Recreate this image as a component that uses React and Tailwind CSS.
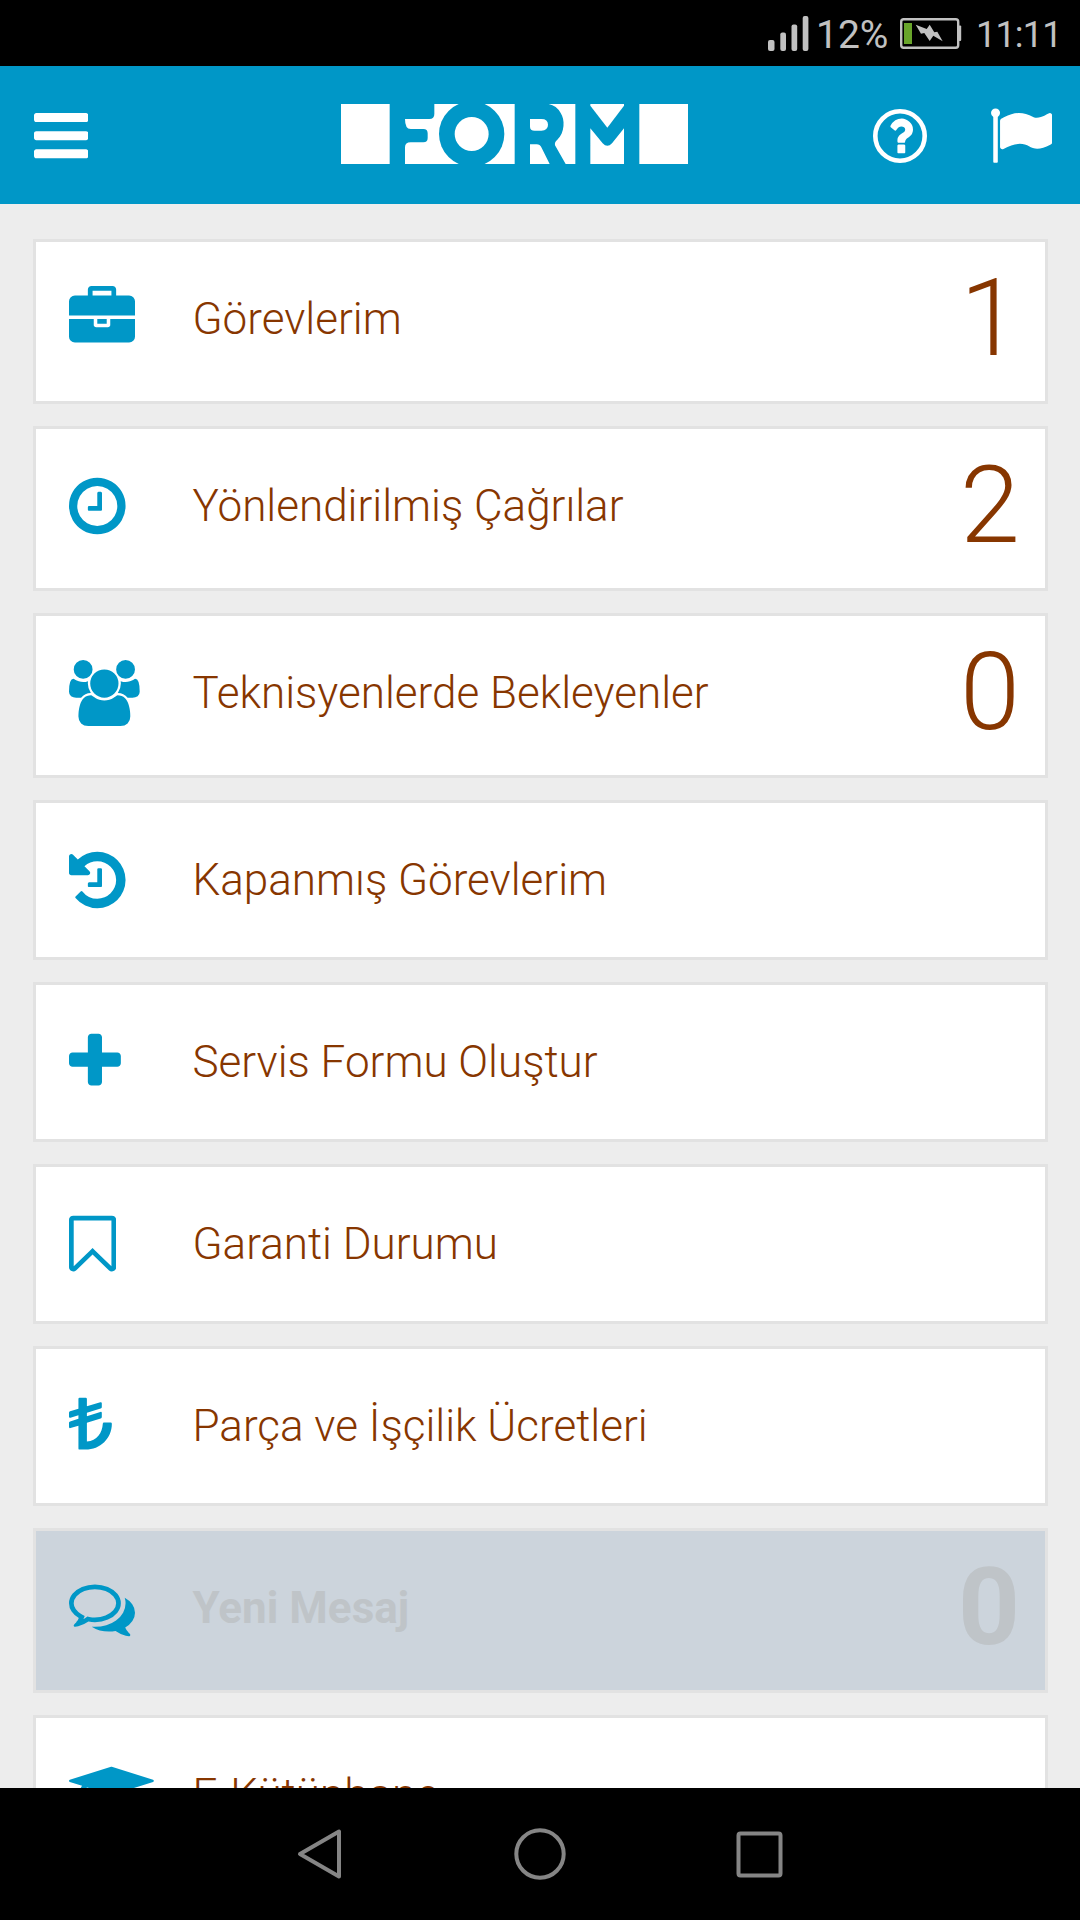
import clsx from 'clsx';

// every icon sits on a 1792-unit grid, the first value is the left edge of the glyph, the second its width
const ICONS = {
  bars: [128, 1536, 'M1664 1344v128q0 26-19 45t-45 19h-1408q-26 0-45-19t-19-45v-128q0-26 19-45t45-19h1408q26 0 45 19t19 45zm0-512v128q0 26-19 45t-45 19h-1408q-26 0-45-19t-19-45v-128q0-26 19-45t45-19h1408q26 0 45 19t19 45zm0-512v128q0 26-19 45t-45 19h-1408q-26 0-45-19t-19-45v-128q0-26 19-45t45-19h1408q26 0 45 19t19 45z'],
  flag: [64, 1728, 'M320 256q0 72-64 110v1266q0 13-9.500 22.500t-22.500 9.500h-64q-13 0-22.500-9.500t-9.500-22.500v-1266q-64-38-64-110 0-53 37.500-90.500t90.500-37.500 90.500 37.500 37.500 90.500zm1472 64v763q0 25-12.500 38.500t-39.500 27.500q-215 116-369 116-61 0-123.500-22t-108.500-48-115.500-48-142.500-22q-192 0-464 146-17 9-33 9-26 0-45-19t-19-45v-742q0-32 31-55 21-14 79-43 236-120 421-120 107 0 200 29t219 88q38 19 88 19 54 0 117.500-21t110-47 88-47 54.500-21q26 0 45 19t19 45z'],
  briefcase: [0, 1792, 'M640 256h512v-128h-512v128zm1152 640v480q0 66-47 113t-113 47h-1472q-66 0-113-47t-47-113v-480h672v160q0 26 19 45t45 19h320q26 0 45-19t19-45v-160h672zm-768 0v128h-256v-128h256zm768-480v384h-1792v-384q0-66 47-113t113-47h352v-160q0-40 28-68t68-28h576q40 0 68 28t28 68v160h352q66 0 113 47t47 113z'],
  clock: [128, 1536, 'M1024 544v448q0 14-9 23t-23 9h-320q-14 0-23-9t-9-23v-64q0-14 9-23t23-9h224v-352q0-14 9-23t23-9h64q14 0 23 9t9 23zm416 352q0-148-73-273t-198-198-273-73-273 73-198 198-73 273 73 273 198 198 273 73 273-73 198-198 73-273zm224 0q0 209-103 385.500t-279.500 279.500-385.500 103-385.500-103-279.500-279.500-103-385.500 103-385.500 279.500-279.500 385.500-103 385.500 103 279.500 279.500 103 385.500z'],
  users: [0, 1920, 'M593 896q-162 5-265 128h-134q-82 0-138-40.500t-56-118.500q0-353 124-353 6 0 43.500 21t97.500 42.500 119 21.500q67 0 133-23-5 37-5 66 0 139 81 256zm1071 637q0 120-73 189.500t-194 69.500h-874q-121 0-194-69.500t-73-189.500q0-53 3.500-103.500t14-109 26.500-108.500 43-97.500 62-81 85.500-53.500 111.500-20q10 0 43 21.500t73 48 107 48 135 21.500 135-21.500 107-48 73-48 43-21.500q61 0 111.500 20t85.500 53.500 62 81 43 97.500 26.500 108.500 14 109 3.500 103.500zm-1024-1277q0 106-75 181t-181 75-181-75-75-181 75-181 181-75 181 75 75 181zm704 384q0 159-112.500 271.500t-271.500 112.500-271.500-112.500-112.500-271.500 112.500-271.500 271.500-112.500 271.500 112.500 112.500 271.500zm576 225q0 78-56 118.500t-138 40.500h-134q-103-123-265-128 81-117 81-256 0-29-5-66 66 23 133 23 59 0 119-21.500t97.500-42.500 43.500-21q124 0 124 353zm-128-609q0 106-75 181t-181 75-181-75-75-181 75-181 181-75 181 75 75 181z'],
  history: [128, 1536, 'M1664 896q0 156-61 298t-164 245-245 164-298 61q-172 0-327-72.500t-264-204.500q-7-10-6.500-22.500t8.500-20.500l137-138q10-9 25-9 16 2 23 12 73 95 179 147t225 52q104 0 198.500-40.500t163.500-109.500 109.500-163.500 40.500-198.500-40.500-198.500-109.500-163.500-163.500-109.500-198.500-40.500q-98 0-188 35.500t-160 101.500l137 138q31 30 14 69-17 40-59 40h-448q-26 0-45-19t-19-45v-448q0-42 40-59 39-17 69 14l130 129q107-101 244.500-156.500t284.500-55.500q156 0 298 61t245 164 164 245 61 298zm-640-288v448q0 14-9 23t-23 9h-320q-14 0-23-9t-9-23v-64q0-14 9-23t23-9h224v-352q0-14 9-23t23-9h64q14 0 23 9t9 23z'],
  plus: [192, 1408, 'M1600 736v192q0 40-28 68t-68 28h-416v416q0 40-28 68t-68 28h-192q-40 0-68-28t-28-68v-416h-416q-40 0-68-28t-28-68v-192q0-40 28-68t68-28h416v-416q0-40 28-68t68-28h192q40 0 68 28t28 68v416h416q40 0 68 28t28 68z'],
  bookmark: [256, 1280, 'M1408 256h-1024v1242l423-406 89-85 89 85 423 406v-1242zm12-128q23 0 44 9 33 13 52.500 41t19.500 62v1289q0 34-19.500 62t-52.500 41q-19 8-44 8-48 0-83-32l-441-424-441 424q-36 33-83 33-23 0-44-9-33-13-52.500-41t-19.500-62v-1289q0-34 19.500-62t52.500-41q21-9 44-9h1048z'],
  lira: [0, 1164, 'M288 128H454Q486 128 486 160V359L850 254Q891 242 891 280V385Q891 412 860 423L486 538V628L850 515Q891 503 891 540V650Q891 680 860 690L486 806V1319C760 1290 905 1080 918 833Q918 801 950 801H1132Q1164 801 1164 833C1164 1230 850 1536 450 1536H288Q256 1536 256 1504V887L40 952Q0 964 0 925V810Q0 785 30 772L256 700V605L40 672Q0 684 0 645V535Q0 508 30 495L256 426V160Q256 128 288 128Z'],
  comments: [0, 1792, 'M704 384q-153 0-286 52t-211.500 141-78.500 191q0 82 53 158t149 132l97 56-35 84q34-20 62-39l44-31 53 10q78 14 153 14 153 0 286-52t211.500-141 78.500-191-78.500-191-211.500-141-286-52zm0-128q191 0 353.500 68.500t256.500 186.500 94 257-94 257-256.500 186.500-353.500 68.500q-86 0-176-16-124 88-278 128-36 9-86 16h-3q-11 0-20.500-8t-11.500-21q-1-3-1-6.500t.5-6.500 2-6l2.500-5 3.500-5.500 4-5 4.500-5 4-4.500q5-6 23-25t26-29.500 22.500-29 25-38.500 20.500-44q-124-72-195-177t-71-224q0-139 94-257t256.500-186.500 353.500-68.500zm822 1169q10 24 20.500 44t25 38.500 22.500 29 26 29.500 23 25q1 1 4 4.500t4.500 5 4 5 3.500 5.500l2.500 5 2 6 .5 6.500-1 6.500q-3 14-13 22t-22 7q-50-7-86-16-154-40-278-128-90 16-176 16-271 0-472-132 58 4 88 4 161 0 309-45t264-129q125-92 192-212t67-254q0-77-23-152 129 71 204 178t75 230q0 120-71 224.500t-195 176.500z'],
  cap: [0, 2304, 'M1774 836l18 316q4 69-82 128t-235 93.500-323 34.500-323-34.500-235-93.500-82-128l18-316 574 181q22 7 48 7t48-7zm530-324q0 23-22 31l-1120 352q-4 1-10 1t-10-1l-652-206q-43 34-71 111.500t-34 178.500q63 36 63 109 0 69-58 107l58 433q2 14-8 25-9 11-24 11h-192q-15 0-24-11-10-11-8-25l58-433q-58-38-58-107 0-73 65-111 11-207 98-330l-333-104q-22-8-22-31t22-31l1120-352q4-1 10-1t10 1l1120 352q22 8 22 31z'],
};

const MENU = [
  { icon: 'briefcase', label: 'Görevlerim', count: 1 },
  { icon: 'clock', label: 'Yönlendirilmiş Çağrılar', count: 2 },
  { icon: 'users', label: 'Teknisyenlerde Bekleyenler', count: 0 },
  { icon: 'history', label: 'Kapanmış Görevlerim' },
  { icon: 'plus', label: 'Servis Formu Oluştur' },
  { icon: 'bookmark', label: 'Garanti Durumu' },
  { icon: 'lira', label: 'Parça ve İşçilik Ücretleri' },
  { icon: 'comments', label: 'Yeni Mesaj', count: 0, disabled: true },
  { icon: 'cap', label: 'E-Kütüphane' },
];

const Icon = ({ name, className }) => {
  const [left, width, d] = ICONS[name];
  return (
    <svg viewBox={`${left} 0 ${width} 1792`} fill="currentColor" className={clsx('w-auto shrink-0', className)}>
      <path d={d} />
    </svg>
  );
};

const Logo = () => (
  <svg viewBox="63 72 1041 180" className="ml-[253px] h-[60px] w-[347px] shrink-0">
    <g fill="#fff">
      <rect x="63" y="72" width="146" height="180" />
      <rect x="255" y="72" width="329" height="180" />
      <rect x="958" y="72" width="146" height="180" />
      <path d="M630 117H664Q684 117 684 134.500T664 152H644Q630 152 630 140Z" />
      <path d="M630 193H650Q660 193 664 202L689 252H630Z" />
      <path d="M686 72H766V252H737L705 196Q703 186 712 179C735 158 735 118 722 99Q710 77 686 72Z" />
      <path d="M811 72H912V77L862 143L811 77Z" />
      <path d="M811 145L848 190Q862 205 876 190L912 145V252H811Z" />
    </g>
    <g fill="#0097c7">
      <path d="M255 72H343V102Q343 117 328 117H255Z" />
      <path d="M255 117Q255 147 272 147H310Q323 147 323 160V174Q323 187 310 187H272Q255 187 255 202H250V117Z" />
      <circle cx="455" cy="162" r="98" />
    </g>
    <circle cx="455" cy="162" r="51" fill="#fff" />
  </svg>
);

const HelpIcon = () => (
  <svg viewBox="0 0 54 54" className="mt-[4.7px] ml-[184.7px] size-[54px] shrink-0">
    <circle cx="27" cy="27" r="24.700" fill="none" stroke="#fff" strokeWidth="4.600" />
    <path
      transform="translate(5.600 2.600) scale(.0245 .0271)"
      fill="#fff"
      d="M1088 1256v240q0 16-12 28t-28 12h-240q-16 0-28-12t-12-28v-240q0-16 12-28t28-12h240q16 0 28 12t12 28zm316-600q0 54-15.500 101t-35 76.500-55 59.500-57.500 43.500-61 35.500q-41 23-68.500 65t-27.500 67q0 17-12 32.500t-28 15.500h-240q-15 0-25.500-18.500t-10.500-37.500v-45q0-83 65-156.500t143-108.500q59-27 84-56t25-76q0-42-46.500-74t-107.500-32q-65 0-108 29-35 25-107 115-13 16-31 16-12 0-25-8l-164-125q-13-10-15.500-25t5.500-28q160-266 464-266 80 0 161 31t146 83 106 127.500 41 158.500z"
    />
  </svg>
);

const StatusBar = () => (
  <div className="flex h-[66px] shrink-0 items-start justify-end bg-black pr-[20px] text-[#c1c1c1]">
    <svg viewBox="0 0 41 36" className="mt-[16px] h-[36px] w-[41px]" fill="currentColor">
      <rect x="0" y="24" width="6.500" height="11" rx="2" />
      <rect x="12.300" y="16.500" width="5.700" height="18.500" rx="2" />
      <rect x="23.500" y="8.500" width="5.700" height="26.500" rx="2" />
      <rect x="34.700" y="0" width="5.700" height="35" rx="2" />
    </svg>
    <span className="mt-[15px] ml-[7px] w-[72px] text-[39px] leading-[40px]">12%</span>
    <svg viewBox="0 0 62 32" className="mt-[18px] ml-[12px] h-[32px] w-[62px]">
      <rect x="1.200" y="1.200" width="57" height="28.600" rx="2.500" fill="none" stroke="#c1c1c1" strokeWidth="2.400" />
      <rect x="58.500" y="7.500" width="2.700" height="15.500" rx="1" fill="#c1c1c1" />
      <rect x="4" y="5" width="8" height="21" fill="#69a52b" />
      <path d="M15.700 6.700L26.700 11L29.700 6.700L34.300 14.300L37.300 13.700L42.700 23.300L33.300 17.700L29.700 23L24.300 15L21 15.700Z" fill="#c1c1c1" />
    </svg>
    <span className="mt-[14.5px] ml-[14px] w-[84px] text-[36px] leading-[40px] tracking-[-0.8px]">11:11</span>
  </div>
);

const MenuCard = ({ icon, label, count, disabled }) => {
  const hasCount = count !== undefined;
  return (
    <div
      className={clsx(
        'flex shrink-0 items-start border-[3px] border-[#e2e2e2] pr-[25px] pl-[33px]',
        hasCount ? 'h-[165px]' : 'h-[160px]',
        disabled ? 'bg-[#ccd4dc] font-bold text-[#bfc4c8]' : 'bg-white font-light text-[#873600]',
      )}
    >
      <div className="mt-[44px] w-[123.5px] shrink-0 text-[#0097c7]">
        <Icon name={icon} className="h-[66px]" />
      </div>
      <span className="mt-[47px] grow text-[44px] leading-[60px] whitespace-nowrap">{label}</span>
      {hasCount && <span className="mt-[26px] text-[108px] leading-[100px]">{count}</span>}
    </div>
  );
};

const NavBar = () => (
  <div className="flex h-[132px] shrink-0 items-center justify-center bg-black">
    <svg viewBox="0 0 46 52" className="h-[52px] w-[46px]" fill="none" stroke="#858585" strokeWidth="4" strokeLinejoin="round">
      <path d="M42 3.500V48.500L3 26Z" />
    </svg>
    <svg viewBox="0 0 52 52" className="ml-[170.5px] size-[52px]" fill="none" stroke="#858585" strokeWidth="4">
      <circle cx="26" cy="26" r="23.700" />
    </svg>
    <svg viewBox="0 0 47 47" className="ml-[170.5px] size-[47px]" fill="none" stroke="#858585" strokeWidth="4">
      <rect x="2.500" y="2.500" width="42" height="42" rx="2" />
    </svg>
  </div>
);

const App = () => (
  <div className="flex h-[1920px] w-[1080px] flex-col overflow-hidden bg-[#ededed] font-['Roboto',sans-serif]">
    <StatusBar />

    <header className="flex h-[138px] shrink-0 items-start bg-[#0097c7] pt-[38px] pl-[33.5px] text-white">
      <Icon name="bars" className="h-[63.4px]" />
      <Logo />
      <HelpIcon />
      <Icon name="flag" className="ml-[64.5px] h-[63.4px]" />
    </header>

    <main className="flex min-h-0 grow flex-col gap-[22px] overflow-hidden pt-[35px] pr-[32px] pl-[33px]">
      {MENU.map((item) => (
        <MenuCard key={item.label} {...item} />
      ))}
    </main>

    <NavBar />
  </div>
);

export default App;
